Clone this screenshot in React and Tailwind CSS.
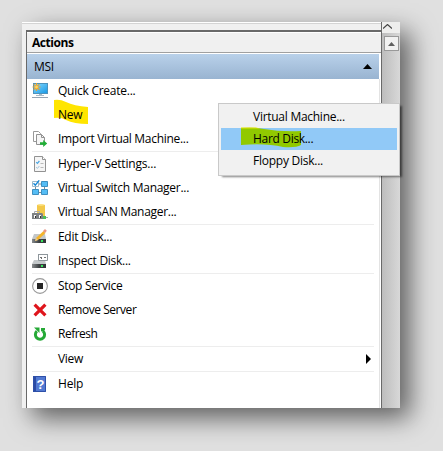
import React from "react";

function Monitor() {
  return (
    <svg width="16" height="16" viewBox="0 0 16 16">
      <defs>
        <linearGradient id="screen" x2="1" y2="1"><stop stopColor="#8bdcff" /><stop offset="1" stopColor="#1597e5" /></linearGradient>
      </defs>
      <rect x="1.5" y=".5" width="14" height="10" fill="url(#screen)" stroke="#4d93bd" />
      <path d="M7 11h3v1h2v1H4v-1h3z" fill="#a8bac6" />
      <path d="M0 14.5h16" stroke="#94a4b3" />
      <path d="M4.5 0v8M.5 4h8M1.7 1.2l5.6 5.6M7.3 1.2L1.7 6.8" stroke="#f2a127" strokeWidth="1.1" />
      <circle cx="4.5" cy="4" r="1.5" fill="#ffd45b" />
    </svg>
  );
}

function ImportIcon() {
  return (
    <svg width="16" height="16" viewBox="0 0 16 16">
      <path d="M1.5.5h5l2 2v8h-7z" fill="#fff" stroke="#999" />
      <path d="M4.5 3.5h5l3 3v7h-8z" fill="#f5f5f5" stroke="#929292" />
      <path d="M9.5 3.5v3h3" fill="none" stroke="#929292" />
      <path d="M8 11.2h3.2V9l4 3.5-4 3.5v-2.2H8z" fill="#20ae36" />
    </svg>
  );
}

function SettingsIcon() {
  return (
    <svg width="16" height="16" viewBox="0 0 16 16">
      <path d="M2.5.5h8l3 3v12h-11z" fill="#f5f5f5" stroke="#929292" />
      <path d="M10.5.5v3h3" fill="#fff" stroke="#929292" />
      <path d="M4.2 6.2l1.2 1.2 2-2.4" fill="none" stroke="#4ba6e2" strokeWidth="1.2" />
      <path d="M4.2 11.2l1.2 1.2 2-2.4" fill="none" stroke="#9fc4dc" strokeWidth="1" />
      <path d="M8.5 7.5h3M8.5 11.5h3" stroke="#b9b9b9" />
    </svg>
  );
}

function SwitchIcon() {
  return (
    <svg width="16" height="16" viewBox="0 0 16 16">
      <path d="M7 4h3M3.5 6v4M12.5 6v4M7 12.5h3" stroke="#7b8d99" />
      <g fill="#55bdf5" stroke="#3f8fbf">
        <path d="M9.5 1.5h6v5h-6zM.5 9.5h6v5h-6zM9.5 9.5h6v5h-6z" />
      </g>
      <path d="M.5 1.5h6v5h-6z" fill="#fff" stroke="#9db9c9" />
      <path d="M1.5 3.2l1.8 2L7.2.4" fill="none" stroke="#1588d8" strokeWidth="1.4" />
    </svg>
  );
}

function SanIcon() {
  return (
    <svg width="16" height="16" viewBox="0 0 16 16">
      <path d="M5 1q4-1.5 8 0v11H5z" fill="#f3c84a" />
      <path d="M5 1q4-1.5 8 0-4 1.5-8 0" fill="#ffe78a" />
      <path d="M2.5 9.5v-2h5v2" fill="none" stroke="#aaa" />
      <path d="M0 9h10l1 1v5H0z" fill="#7d8183" />
      <path d="M2 11h2v3H2zM7 11h2v3H7z" fill="#f8f8f8" />
      <path d="M3 12h1v2H3zM8 12h1v2H8z" fill="#333" />
      <path d="M11 12h3v3h-3z" fill="#4cbf58" /><path d="M14 13h2v1h-2z" fill="#aaa" />
    </svg>
  );
}

function DriveIcon({ inspect }) {
  return (
    <svg width="16" height="16" viewBox="0 0 16 16">
      <defs>
        <linearGradient id="drive"><stop stopColor="#888b8d" /><stop offset=".5" stopColor="#3d4143" /><stop offset="1" stopColor="#303436" /></linearGradient>
      </defs>
      <path d={inspect ? "M2 7h11l1 4H0z" : "M2 5h11l1 5H0z"} fill="#c3c7c9" />
      <path d={inspect ? "M0 11h14v4H0z" : "M0 10h14v4H0z"} fill="url(#drive)" />
      <path d={inspect ? "M9 12h2v2H9z" : "M9 11h2v2H9z"} fill="#37e45b" />
      {inspect ? (
        <>
          <path d="M6.5 1.5h9v6h-9z" fill="#fff" stroke="#8e969b" />
          <path d="M6 1.5h10" stroke="#8e969b" />
          <path d="M8 4h2v1H8zM12 4h2v1h-2zM9 5h1v1H9z" fill="#707070" />
        </>
      ) : (
        <>
          <path d="M3 12l1-3 7.5-7 2 2-7.5 7z" fill="#f4b42b" />
          <path d="M11 2l2-2 1.8 1.8L13 4z" fill="#e99686" /><path d="M3 12l1-3 2 2z" fill="#e8cda0" />
        </>
      )}
    </svg>
  );
}

function StopIcon() {
  return <svg width="16" height="16" viewBox="0 0 16 16"><circle cx="8" cy="8" r="7.4" fill="#fff" stroke="#999" strokeWidth="1.1" /><path d="M5 5h6v6H5z" fill="#252525" /></svg>;
}

function RemoveIcon() {
  return <svg width="16" height="16" viewBox="0 0 16 16"><path d="M2.6 2.6l10.8 10.8M13.4 2.6L2.6 13.4" stroke="#df151c" strokeWidth="3.2" /></svg>;
}

function RefreshIcon() {
  return (
    <svg width="16" height="16" viewBox="0 0 16 16">
      <path d="M4.9 5.2A4.6 4.6 0 1 0 11 5.1" fill="none" stroke="#25a936" strokeWidth="3" />
      <path d="M2 1.5h5.5V7z" fill="#25a936" /><path d="M9 2h4v1.8l-2 2-2-.6z" fill="#25a936" />
    </svg>
  );
}

function HelpIcon() {
  return (
    <svg width="16" height="16" viewBox="0 0 16 16">
      <path d="M1 0h13v16H1z" fill="#5279d2" /><path d="M1 0h3v16H1z" fill="#2b4ba4" />
      <path d="M1.5.5h12v15h-12z" fill="none" stroke="#2e50a8" />
      <text x="4.6" y="12.6" fill="#fff" fontFamily="Liberation Sans, sans-serif" fontWeight="bold" fontSize="13">?</text>
    </svg>
  );
}

const groups = [
  [["Quick Create...", Monitor, "tracking-[-0.25px]"], ["New", null, "tracking-[-0.25px]"], ["Import Virtual Machine...", ImportIcon, "tracking-[-0.3px]"]],
  [["Hyper-V Settings...", SettingsIcon, "tracking-[-0.2px]"], ["Virtual Switch Manager...", SwitchIcon, "tracking-[-0.28px]"], ["Virtual SAN Manager...", SanIcon, "tracking-[-0.3px]"]],
  [["Edit Disk...", DriveIcon, "tracking-[-0.3px]"], ["Inspect Disk...", DriveIcon, "tracking-[-0.28px]"]],
  [["Stop Service", StopIcon, "tracking-[-0.33px]"], ["Remove Server", RemoveIcon, "tracking-[-0.45px]"], ["Refresh", RefreshIcon, "tracking-[-0.5px]"]],
  [["View", null, "tracking-[-0.3px]"]],
  [["Help", HelpIcon, "tracking-[-0.2px]"]],
];

function ActionRow({ label, Icon, tracking }) {
  return (
    <div className="relative flex h-6 items-center pl-[5px]">
      {label === "New" && (
        <svg className="absolute left-[27px] top-[-4px]" width="35" height="27" viewBox="0 0 35 27">
          <path d="M0 1Q6 0 12 3Q20 7 34 8V25Q20 25 12 21Q7 18 0 19Z" fill="#ffe500" />
        </svg>
      )}
      <div className="w-[26px]">{Icon && <Icon inspect={label === "Inspect Disk..."} />}</div>
      <span className={`relative whitespace-nowrap ${tracking}`}>{label}</span>
      {label === "View" && <svg className="ml-auto mr-[8px]" width="5" height="10"><path d="M0 0l5 5-5 5z" fill="#000" /></svg>}
    </div>
  );
}

function ContextMenu() {
  return (
    <div className="absolute left-[196px] top-[81px] h-[73px] w-[182px] border border-[#c9c9c9] bg-[#f1f1f1] px-[2px] pt-[2px] shadow-[3px_2px_2px_-1px_rgba(0,0,0,0.5)]">
      <div className="flex h-[22px] items-center pl-[32px] tracking-[-0.27px]">Virtual Machine...</div>
      <div className="relative flex h-[22px] items-center bg-[#91c9f7] pl-[32px] tracking-[-0.32px]">
        <svg className="absolute left-[20px] top-[-1px]" width="61" height="22">
          <path d="M0 1Q13 0 23 2Q40 5 60 4V18Q55 21 42 20Q25 16 0 18Z" fill="#91c900" />
          <path d="M0 .5h15l4 1H0z" fill="#e2e600" />
        </svg>
        <span className="relative">Hard Disk...</span>
      </div>
      <div className="flex h-[22px] items-center pl-[32px] tracking-[-0.25px]">Floppy Disk...</div>
    </div>
  );
}

export default function App() {
  return (
    <main className="h-[451px] w-[443px] overflow-hidden bg-[#e0e0e0] pl-[22px] pt-[22px] font-['Open_Sans','Noto_Sans',sans-serif] text-[12px] leading-4 text-black">
      <div className="relative flex h-[386px] w-[378px] bg-[#f0f0f0] shadow-[10px_10px_24px_0px_rgba(0,0,0,0.58)]">
        <section className="flex h-full w-[359px] shrink-0 flex-col bg-[#f0f0f0]">
          <div className="h-[8px] shrink-0 border-t border-white"><div className="h-px bg-[#d4d4d4]" /></div>
          <div className="ml-[4px] flex min-h-0 flex-1 flex-col border-l border-t-2 border-[#696969] bg-white">
            <header className="flex h-[21px] shrink-0 items-center border-b border-t border-b-[#a0a0a0] border-t-white bg-[#f0f0f0] pl-[5px] pt-px font-bold tracking-[-0.45px]">Actions</header>
            <div className="mr-[2px] mt-px flex h-[25px] shrink-0 items-center justify-between bg-linear-to-b from-[#b9d1ea] to-[#99b4d1] pl-[7px] pr-[7px]">
              <span className="pt-px tracking-[-0.3px]">MSI</span>
              <svg width="9" height="5"><path d="M4.5 0L9 5H0z" fill="#000" /></svg>
            </div>
            <div className="mr-px flex-1 border-r border-[#e3e3e3]">
              {groups.map((group, i) => (
                <React.Fragment key={i}>
                  {i > 0 && <div className="ml-[5px] mr-[5px] h-px bg-[#ededed]" />}
                  {group.map(([label, Icon, tracking]) => <ActionRow key={label} label={label} Icon={Icon} tracking={tracking} />)}
                </React.Fragment>
              ))}
            </div>
          </div>
        </section>
        <aside className="flex h-full w-[19px] flex-col border-l border-[#696969] bg-linear-to-r from-[#bdbdbd] to-[#d8d8d8]">
          <div className="h-[11px] bg-[#eeeeed] pl-px pt-[2px]"><svg width="9" height="5"><path d="M0 4.5L4.5.5 9 4.5" fill="none" stroke="#444" strokeWidth="1.2" /></svg></div>
          <div className="ml-[2px] mt-[3px] flex h-[15px] w-[15px] items-center justify-center border border-[#999] bg-[#f1f1f1]"><svg width="7" height="4"><path d="M3.5 0L7 4H0z" fill="#606060" /></svg></div>
        </aside>
        <ContextMenu />
      </div>
    </main>
  );
}
